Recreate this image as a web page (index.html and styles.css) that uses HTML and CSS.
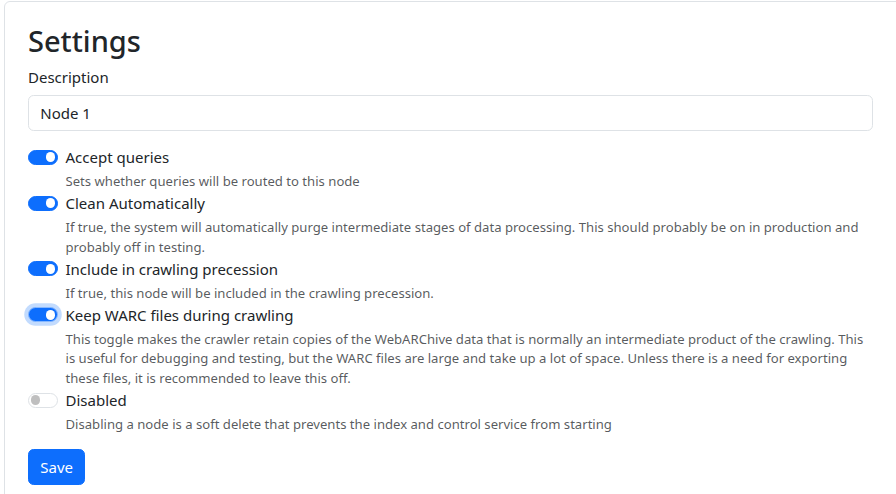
FILE: index.html
```html
<!DOCTYPE html>
<html lang="en">
<head>
<meta charset="utf-8">
<title>Settings</title>
<link rel="stylesheet" href="styles.css">
</head>
<body>
<div class="card">
  <h2 class="title">Settings</h2>
  <form class="form">
    <label class="form-label" for="description">Description</label>
    <input class="form-control" id="description" type="text" value="Node 1">

    <div class="checks">
      <div class="check">
        <div class="check-row">
          <span class="switch on"><span class="knob"></span></span>
          <span class="check-label">Accept queries</span>
        </div>
        <div class="form-text">Sets whether queries will be routed to this node</div>
      </div>

      <div class="check">
        <div class="check-row">
          <span class="switch on"><span class="knob"></span></span>
          <span class="check-label">Clean Automatically</span>
        </div>
        <div class="form-text">If true, the system will automatically purge intermediate stages of data processing. This should probably be on in production and probably off in testing.</div>
      </div>

      <div class="check">
        <div class="check-row">
          <span class="switch on"><span class="knob"></span></span>
          <span class="check-label">Include in crawling precession</span>
        </div>
        <div class="form-text">If true, this node will be included in the crawling precession.</div>
      </div>

      <div class="check">
        <div class="check-row">
          <span class="switch on focus"><span class="knob"></span></span>
          <span class="check-label">Keep WARC files during crawling</span>
        </div>
        <div class="form-text">This toggle makes the crawler retain copies of the WebARChive data that is normally an intermediate product of the crawling. This is useful for debugging and testing, but the WARC files are large and take up a lot of space. Unless there is a need for exporting these files, it is recommended to leave this off.</div>
      </div>

      <div class="check">
        <div class="check-row">
          <span class="switch"><span class="knob"></span></span>
          <span class="check-label">Disabled</span>
        </div>
        <div class="form-text">Disabling a node is a soft delete that prevents the index and control service from starting</div>
      </div>
    </div>

    <button class="btn" type="button">Save</button>
  </form>
</div>
</body>
</html>
```

FILE: styles.css
```css
html {
  overflow: hidden;
}

body {
  margin: 0;
  padding: 1px 0 0 4px;
  font-family: "Noto Sans", "Open Sans", sans-serif;
  font-size: 15px;
  line-height: 1.5;
  color: #212529;
  background: #fff;
}

.card {
  margin-right: -24px;
  border: 1px solid #dee2e6;
  border-radius: 6px 0 0 0;
  padding: 21.5px 46px 22.5px 23px;
}

.title {
  margin: 0 0 7.5px;
  font-size: 29px;
  font-weight: 500;
  line-height: 1.2;
}

.form {
  display: flex;
  flex-direction: column;
  align-items: flex-start;
}

.form-label {
  margin-bottom: 6.5px;
}

.form-control {
  box-sizing: border-box;
  width: 100%;
  height: 35.75px;
  margin: 0 0 15.5px;
  padding: 5.6px 11.25px;
  font: inherit;
  color: #212529;
  background: #fff;
  border: 1px solid #dee2e6;
  border-radius: 5.6px;
  outline: none;
}

.checks {
  display: flex;
  flex-direction: column;
  align-self: stretch;
}

.check-row {
  display: flex;
  align-items: flex-start;
}

.switch {
  box-sizing: border-box;
  flex: none;
  width: 30px;
  height: 15px;
  margin-top: 3.75px;
  margin-right: 7.5px;
  border: 1px solid #dee2e6;
  border-radius: 15px;
  background: #fff;
  display: flex;
  align-items: center;
  justify-content: flex-start;
  padding: 0 1.6px;
}

.knob {
  width: 9.75px;
  height: 9.75px;
  border-radius: 50%;
  background: #bfbfbf;
}

.switch.on {
  background: #0d6efd;
  border-color: #0d6efd;
  justify-content: flex-end;
}

.switch.on .knob {
  background: #fff;
}

.switch.focus {
  border-color: #86b7fe;
  box-shadow: 0 0 0 3.75px rgba(13, 110, 253, 0.25);
}

.form-text {
  margin-top: 3.75px;
  padding-left: 37.5px;
  font-size: 13.125px;
  color: rgba(33, 37, 41, 0.75);
}

.btn {
  margin-top: 14.25px;
  height: 35.75px;
  padding: 0 11.25px;
  font: inherit;
  color: #fff;
  background: #0d6efd;
  border: 1px solid #0d6efd;
  border-radius: 5.6px;
}
```
